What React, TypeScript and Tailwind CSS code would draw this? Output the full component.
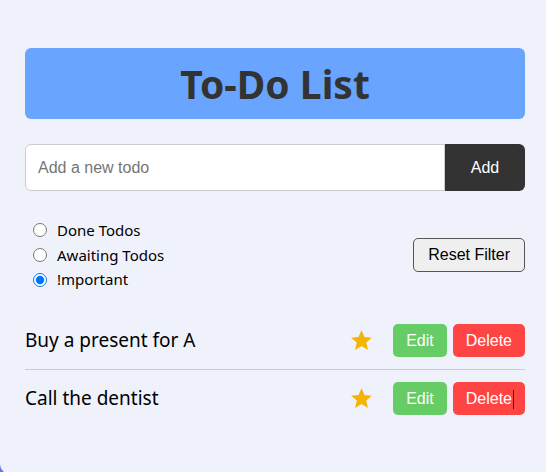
import { MdStar } from 'react-icons/md';

const todos = [
  { id: 1, text: 'Buy a present for A' },
  { id: 2, text: 'Call the dentist' },
];

const filters = [
  { id: 'done', label: 'Done Todos', checked: false },
  { id: 'awaiting', label: 'Awaiting Todos', checked: false },
  { id: 'important', label: '!mportant', checked: true },
];

export default function App() {
  return (
    <div className="h-[472px] overflow-hidden bg-[#5d7de2]">
      <div className="h-[474px] rounded-bl-[10px] bg-[#f0f2fb] pl-[25px] pr-[21px] pt-[48px] font-['Noto_Sans',sans-serif]">
        <header className="flex h-[71px] items-center justify-center rounded-md bg-[#69a5ff]">
          <h1 className="text-[39px] font-bold leading-none text-[#333]">To-Do List</h1>
        </header>

        <form className="mt-[25px] flex h-[47px]" onSubmit={(e) => e.preventDefault()}>
          <input
            type="text"
            placeholder="Add a new todo"
            className="min-w-0 flex-1 rounded-l-md border border-[#ccc] bg-white px-[12px] font-['Liberation_Sans',Arial,sans-serif] text-base text-[#111] outline-none placeholder:text-[#757575]"
          />
          <button className="w-[80px] rounded-r-md bg-[#333] font-['Liberation_Sans',Arial,sans-serif] text-base text-white">
            Add
          </button>
        </form>

        <div className="mt-[27px] flex items-center justify-between">
          <div className="flex flex-col pl-[8px]">
            {filters.map((f) => (
              <label key={f.id} className="flex h-[24.7px] items-center gap-[10px] text-[15px] text-black">
                <input
                  type="radio"
                  name="filter"
                  defaultChecked={f.checked}
                  className="m-0 h-[14px] w-[14px] accent-[#0075ff]"
                />
                <span>{f.label}</span>
              </label>
            ))}
          </div>
          <button className="h-[34px] rounded-[5px] border border-[#555] bg-[#efefef] px-[14px] font-['Liberation_Sans',Arial,sans-serif] text-base text-black">
            Reset Filter
          </button>
        </div>

        <ul className="mt-[20px]">
          {todos.map((todo, i) => (
            <li
              key={todo.id}
              className={`flex items-center py-[12px] ${i === 0 ? 'border-b border-[#ccc]' : ''}`}
            >
              <span className="flex-1 text-[19px] text-black">{todo.text}</span>
              <MdStar className="mr-[19px] h-[25px] w-[25px] text-[#f5b400]" />
              <div className="flex gap-[6px] font-['Liberation_Sans',Arial,sans-serif] text-base text-white">
                <button className="h-[33px] rounded-[5px] bg-[#66cc66] px-[13px]">Edit</button>
                <button className="relative h-[33px] rounded-[5px] bg-[#ff4444] px-[13px]">
                  Delete
                  {i === 1 && <span className="absolute left-[60px] top-[8px] h-[19px] w-px bg-[#222]" />}
                </button>
              </div>
            </li>
          ))}
        </ul>
      </div>
    </div>
  );
}
